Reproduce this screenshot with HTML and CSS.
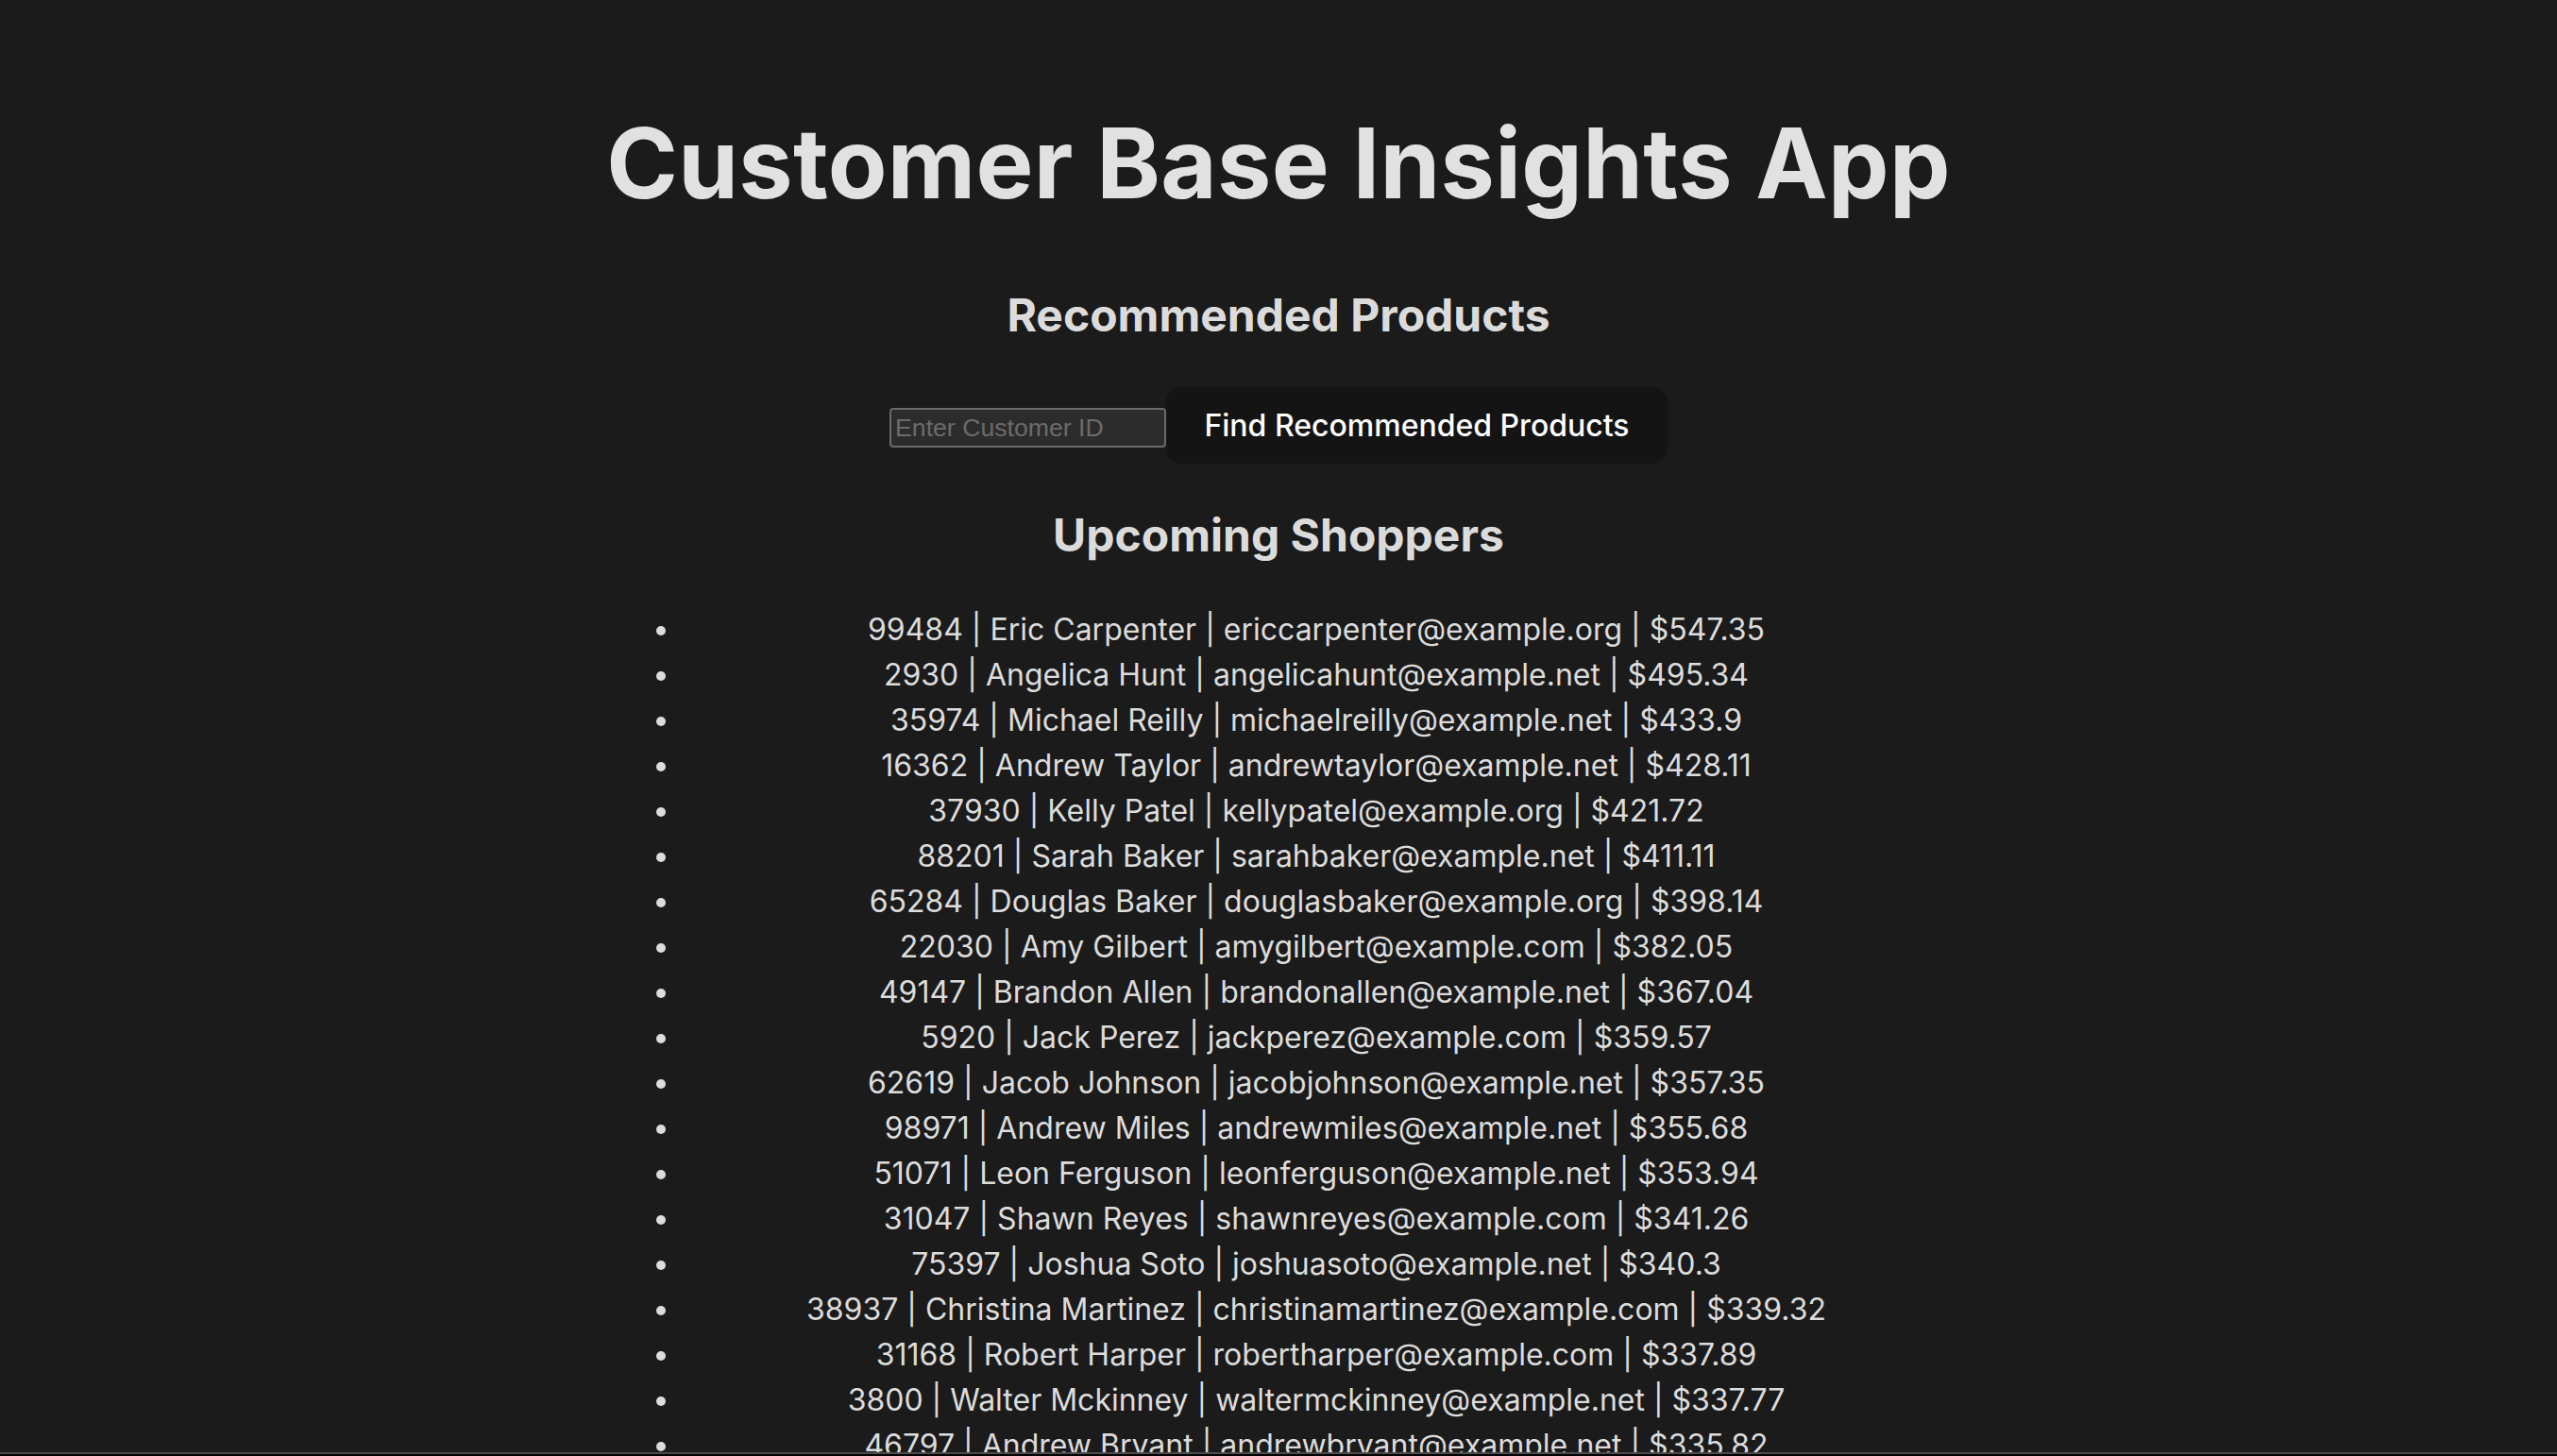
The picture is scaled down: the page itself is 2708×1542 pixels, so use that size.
FILE: index.html
```html
<!DOCTYPE html>
<html lang="en">
<head>
<meta charset="UTF-8">
<title>Customer Base Insights App</title>
<link rel="stylesheet" href="styles.css">
</head>
<body>
<div class="app">
  <h1 class="title">Customer Base Insights App</h1>
  <h2 class="section-title">Recommended Products</h2>
  <div class="search-row"><input class="customer-input" type="text" placeholder="Enter Customer ID"><button class="find-btn">Find Recommended Products</button></div>
  <h2 class="section-title">Upcoming Shoppers</h2>
  <ul class="shopper-list">
    <li>99484 | Eric Carpenter | ericcarpenter@example.org | $547.35</li>
    <li>2930 | Angelica Hunt | angelicahunt@example.net | $495.34</li>
    <li>35974 | Michael Reilly | michaelreilly@example.net | $433.9</li>
    <li>16362 | Andrew Taylor | andrewtaylor@example.net | $428.11</li>
    <li>37930 | Kelly Patel | kellypatel@example.org | $421.72</li>
    <li>88201 | Sarah Baker | sarahbaker@example.net | $411.11</li>
    <li>65284 | Douglas Baker | douglasbaker@example.org | $398.14</li>
    <li>22030 | Amy Gilbert | amygilbert@example.com | $382.05</li>
    <li>49147 | Brandon Allen | brandonallen@example.net | $367.04</li>
    <li>5920 | Jack Perez | jackperez@example.com | $359.57</li>
    <li>62619 | Jacob Johnson | jacobjohnson@example.net | $357.35</li>
    <li>98971 | Andrew Miles | andrewmiles@example.net | $355.68</li>
    <li>51071 | Leon Ferguson | leonferguson@example.net | $353.94</li>
    <li>31047 | Shawn Reyes | shawnreyes@example.com | $341.26</li>
    <li>75397 | Joshua Soto | joshuasoto@example.net | $340.3</li>
    <li>38937 | Christina Martinez | christinamartinez@example.com | $339.32</li>
    <li>31168 | Robert Harper | robertharper@example.com | $337.89</li>
    <li>3800 | Walter Mckinney | waltermckinney@example.net | $337.77</li>
    <li>46797 | Andrew Bryant | andrewbryant@example.net | $335.82</li>
  </ul>
</div>
<div class="bottom-edge"></div>
</body>
</html>
```
FILE: styles.css
```css
html, body {
  margin: 0;
  padding: 0;
}

body {
  background: #1b1b1b;
  color: rgba(255, 255, 255, 0.87);
  font-family: Inter, "Noto Sans", system-ui, sans-serif;
  font-size: 32px;
  font-weight: 400;
  line-height: 1.5;
  display: flex;
  justify-content: center;
  -webkit-font-smoothing: antialiased;
}

.app {
  padding: 48px 64px 64px;
  text-align: center;
}

.title {
  font-size: 102.4px;
  line-height: 1.1;
  font-weight: 700;
  letter-spacing: 0.28px;
  margin: 68.6px 0;
}

.section-title {
  font-size: 48px;
  font-weight: 700;
  margin: 39.84px 0;
}

.search-row {
  margin: 0;
}

.customer-input {
  box-sizing: border-box;
  width: 293px;
  height: 42px;
  padding: 2px 4px;
  border: 2px solid #6a6a6a;
  border-radius: 4px;
  background: #2c2c2c;
  color: #ffffff;
  font-family: "Liberation Sans", Arial, sans-serif;
  font-size: 26.67px;
  vertical-align: baseline;
  outline: none;
}

.customer-input::placeholder {
  color: #6b6b6b;
}

.find-btn {
  border-radius: 16px;
  border: 2px solid transparent;
  padding: 19.2px 38.4px;
  font-size: 32px;
  font-weight: 500;
  font-family: inherit;
  line-height: normal;
  background: #141414;
  color: #ffffff;
  cursor: pointer;
}

.shopper-list {
  margin: 32px 0;
  padding-left: 80px;
}

.shopper-list li {
  color: #dcdcdc;
}

.bottom-edge {
  position: fixed;
  left: 0;
  right: 0;
  bottom: 0;
  height: 2px;
  background: #000;
  border-top: 2px solid #4b4b4b;
}
```
